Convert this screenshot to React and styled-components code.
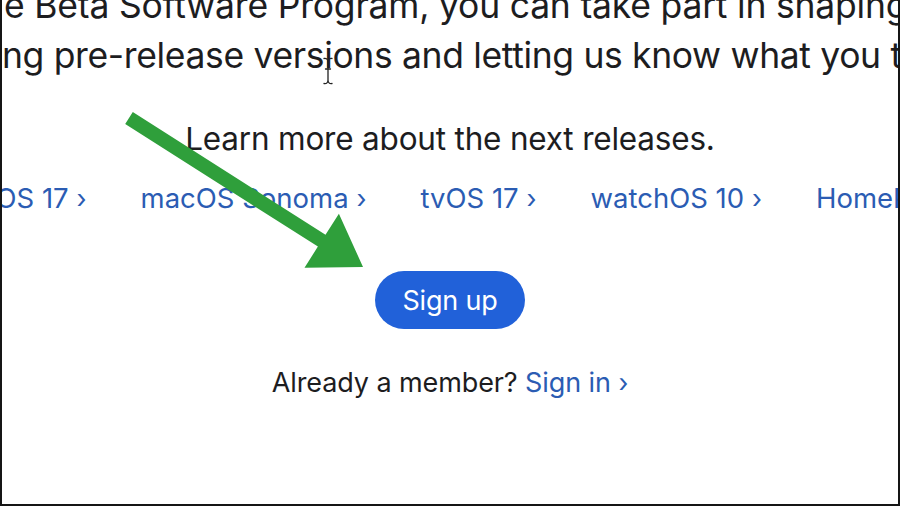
import React from "react";
import styled, { createGlobalStyle } from "styled-components";

const GlobalStyle = createGlobalStyle`
  html, body { margin: 0; padding: 0; background: #ffffff; }
  * { box-sizing: border-box; }
`;

const Frame = styled.div`
  position: relative;
  width: 900px;
  height: 506px;
  overflow: hidden;
  background: #ffffff;
  border-left: 2px solid #151515;
  border-right: 2px solid #151515;
  border-bottom: 2px solid #151515;
  display: flex;
  flex-direction: column;
  align-items: center;
  font-family: Inter, "Liberation Sans", sans-serif;
  color: #1d1d1f;
`;

const Paragraph = styled.div`
  align-self: stretch;
  margin-top: -19px;
  display: flex;
  flex-direction: column;
`;

const ParagraphLine = styled.div`
  font-size: 35.5px;
  line-height: 50px;
  white-space: nowrap;
  margin-left: ${(p) => p.$shift}px;
  letter-spacing: ${(p) => p.$tracking}px;
`;

const Heading = styled.h2`
  margin: 38px 0 0;
  font-size: 31.5px;
  line-height: 40px;
  font-weight: 400;
  white-space: nowrap;
  letter-spacing: -0.2px;
`;

const LinkRow = styled.div`
  align-self: stretch;
  margin-top: 22px;
  display: flex;
  gap: 54px;
  white-space: nowrap;
  margin-left: ${(p) => p.$shift}px;
`;

const ReleaseLink = styled.a`
  font-size: 27.5px;
  line-height: 34px;
  color: #2b5cb3;
  text-decoration: none;
  flex: none;
`;

const Chevron = styled.span`
  padding-left: 0.3em;
  font-size: 0.95em;
`;

const SignUpButton = styled.button`
  margin-top: 55px;
  width: 150px;
  height: 58px;
  border: none;
  border-radius: 29px;
  background: #2161d9;
  color: #ffffff;
  font-family: inherit;
  font-size: 27px;
  letter-spacing: -0.2px;
  cursor: pointer;
`;

const MemberLine = styled.p`
  margin: 37px 0 0;
  font-size: 27px;
  line-height: 33px;
  white-space: nowrap;
  letter-spacing: -0.1px;
`;

const SignInLink = styled.a`
  color: #2b5cb3;
  text-decoration: none;
`;

const Overlay = styled.svg`
  position: absolute;
  left: 0;
  top: 0;
  pointer-events: none;
`;

const TextCursor = styled.svg`
  position: absolute;
  left: 320px;
  top: 57px;
  pointer-events: none;
`;

const links = ["iPadOS 17", "macOS Sonoma", "tvOS 17", "watchOS 10", "HomePod 17"];

export default function App() {
  return (
    <>
      <GlobalStyle />
      <Frame>
        <Paragraph>
          <ParagraphLine $shift={2} $tracking={-0.2}>
            e Beta Software Program, you can take part in shaping Apple software by
          </ParagraphLine>
          <ParagraphLine $shift={0} $tracking={-0.35}>
            ng pre-release versions and letting us know what you think.
          </ParagraphLine>
        </Paragraph>
        <Heading>Learn more about the next releases.</Heading>
        <LinkRow $shift={-63}>
          {links.map((l) => (
            <ReleaseLink key={l} href="#">
              {l}
              <Chevron>›</Chevron>
            </ReleaseLink>
          ))}
        </LinkRow>
        <SignUpButton>Sign up</SignUpButton>
        <MemberLine>
          Already a member? <SignInLink href="#">Sign in<Chevron>›</Chevron></SignInLink>
        </MemberLine>

        <TextCursor width="12" height="28" viewBox="0 0 12 28">
          <path
            d="M2 1.5 Q6 1 6 5 Q6 1 10 1.5 M6 5 V23 M2 26.5 Q6 27 6 23 Q6 27 10 26.5 M3.5 12 H8.5"
            fill="none"
            stroke="#222"
            strokeWidth="1.3"
            strokeLinecap="round"
          />
        </TextCursor>

        <Overlay width="900" height="506" viewBox="0 0 900 506">
          <polygon
            points="130.8,112.1 323.5,234.8 336.9,213.7 361,267 302.5,267.7 315.9,246.6 123.2,123.9"
            fill="#2f9f3b"
          />
        </Overlay>
      </Frame>
    </>
  );
}
